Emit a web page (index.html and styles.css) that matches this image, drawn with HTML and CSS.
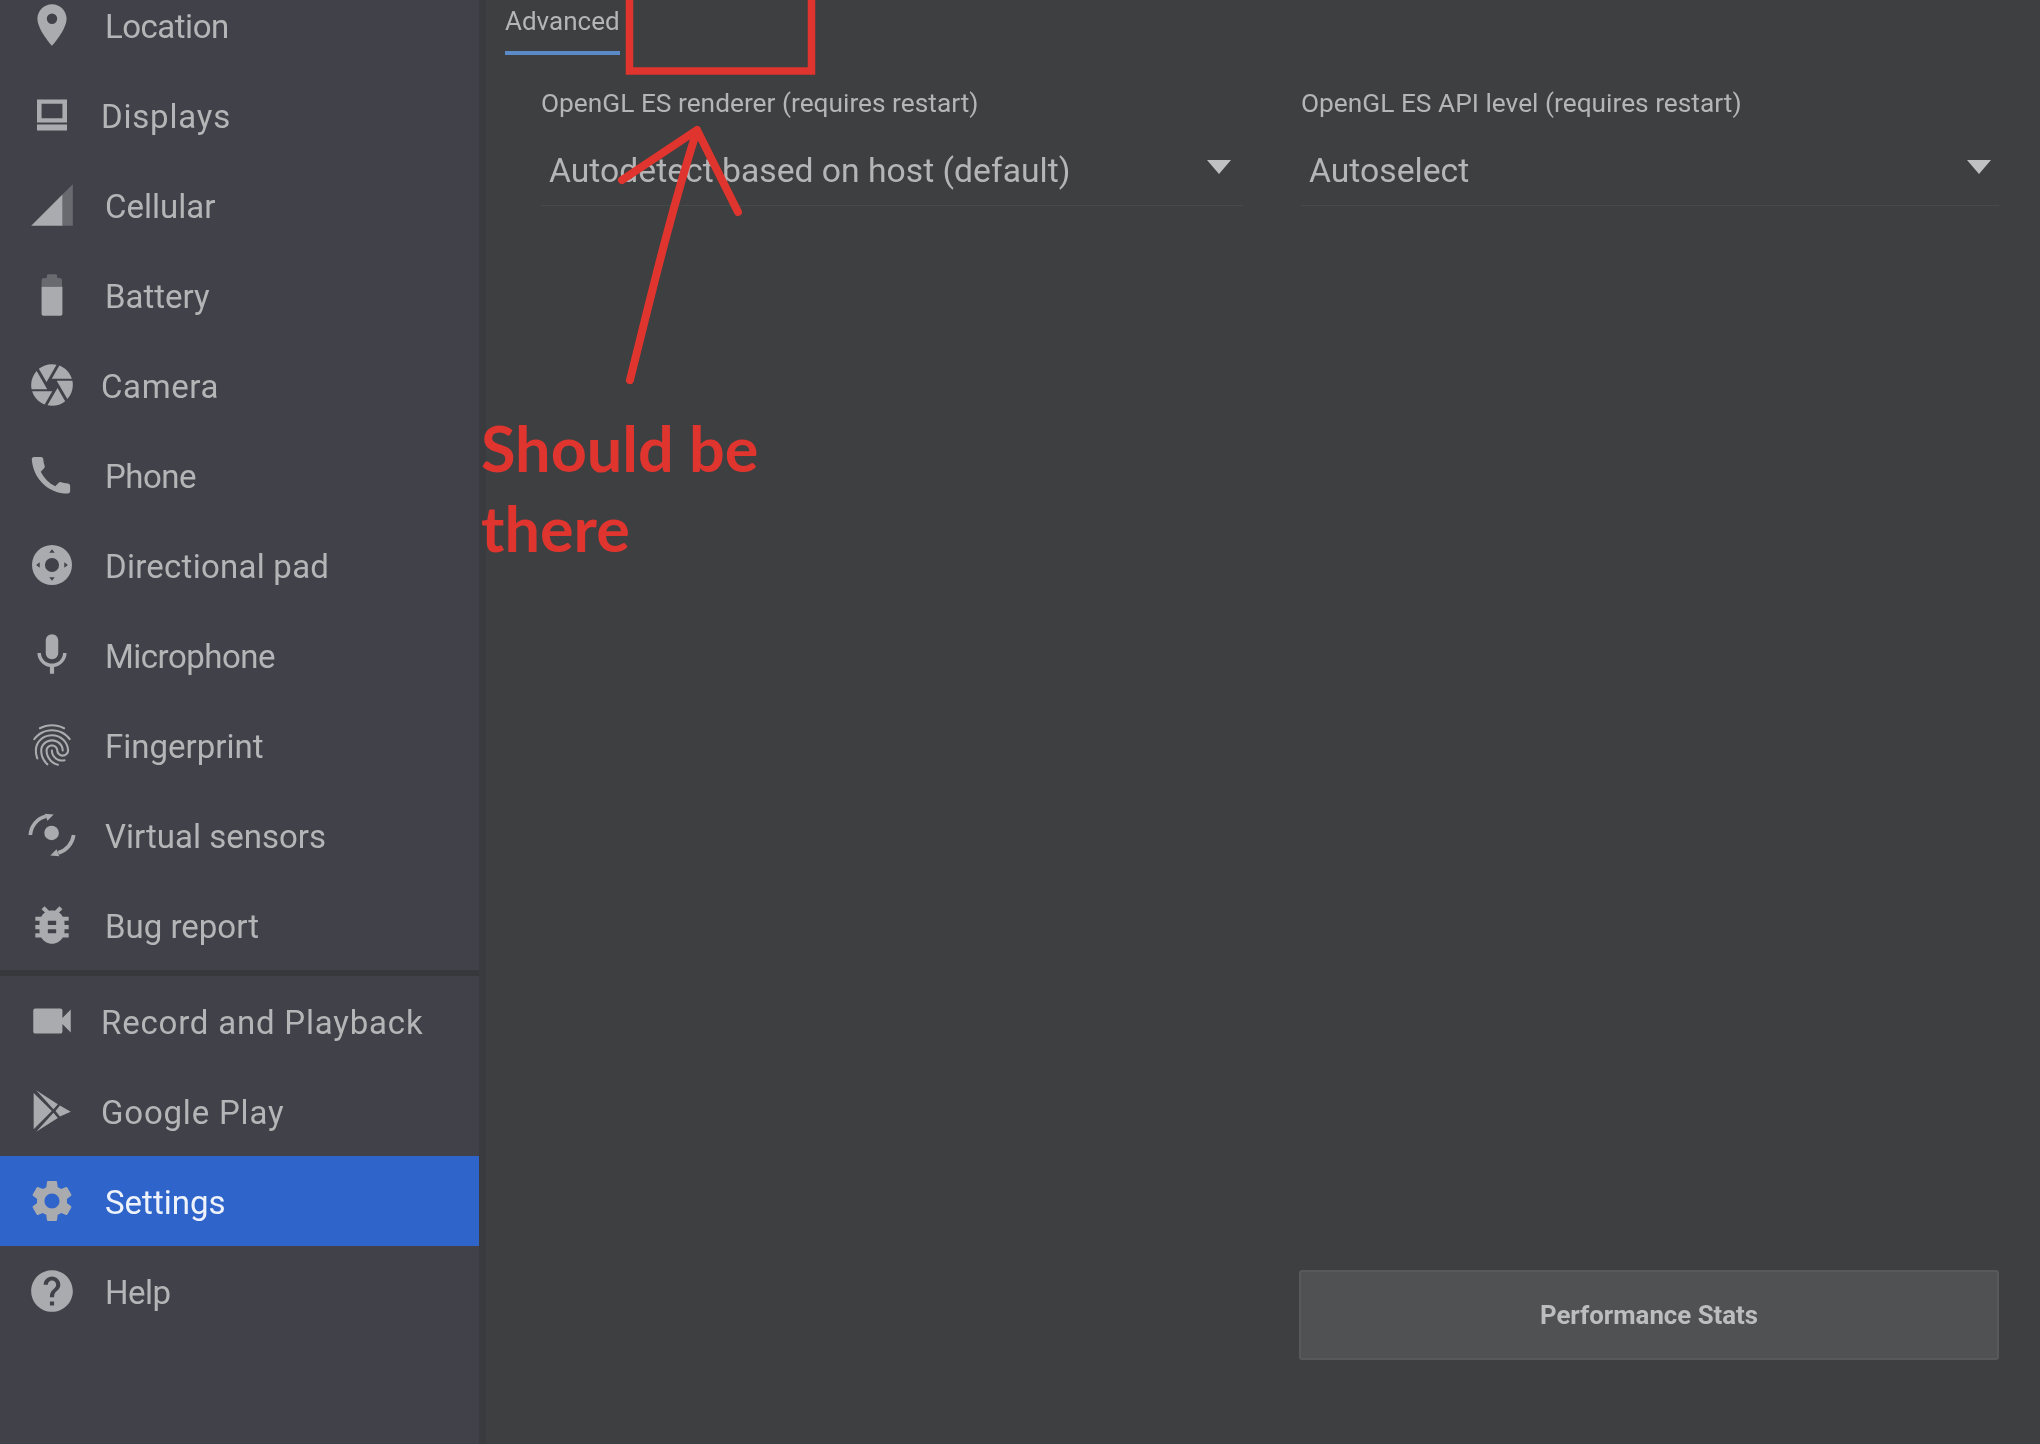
FILE: index.html
```html
<!DOCTYPE html>
<html lang="en">
<head>
<meta charset="utf-8">
<title>Extended controls - Settings</title>
<link rel="stylesheet" href="styles.css">
</head>
<body>
<div class="app">
  <nav class="sidebar">
    <ul class="nav-group nav-group-first">
      <li class="nav-row nav-row-snug"><svg class="icon" viewBox="0 0 24 24"><path fill-rule="evenodd" d="M12 2C8.13 2 5 5.13 5 9c0 5.25 7 13 7 13s7-7.75 7-13c0-3.87-3.13-7-7-7zm0 9.5a2.5 2.5 0 010-5 2.5 2.5 0 010 5z"/></svg><span>Location</span></li>
      <li class="nav-row nav-row-tight"><svg class="icon" viewBox="0 0 24 24"><path fill-rule="evenodd" d="M4.8 4.6h14.4v11H4.8zM7 6.6v7h10v-7zM4.8 16.6h14.4v2.8H4.8z"/></svg><span>Displays</span></li>
      <li class="nav-row"><svg class="icon" viewBox="0 0 24 24"><path class="dim" d="M17 7L22 2v20h-5z"/><path d="M2 22L17 7v15z"/></svg><span>Cellular</span></li>
      <li class="nav-row"><svg class="icon" viewBox="0 0 24 24"><path class="dim" d="M9.5 2.8c0-.4.3-.8.8-.8h3.400c.5 0 .8.4.8.8v1h1.200c.6 0 1.100.5 1.100 1.100V8H7V4.900c0-.6.5-1.100 1.100-1.100h1.400z"/><path d="M7 8h10v13c0 .6-.5 1-1.100 1H8.100C7.500 22 7 21.600 7 21z"/></svg><span>Battery</span></li>
      <li class="nav-row nav-row-tight nav-row-camera"><svg class="icon" viewBox="0 0 24 24"><path d="M9.400 10.500l4.770-8.260C13.470 2.090 12.750 2 12 2c-2.400 0-4.600.85-6.320 2.250l3.660 6.350.06-.1zM21.540 9c-.92-2.920-3.150-5.260-6-6.340L11.880 9h9.660zm.26 1h-7.490l.29.5 4.760 8.250C21 16.970 22 14.610 22 12c0-.69-.07-1.350-.2-2zM8.540 12l-3.900-6.750C3.010 7.030 2 9.390 2 12c0 .69.07 1.350.2 2h7.490l-1.150-2zm-6.080 3c.92 2.920 3.150 5.260 6 6.340L12.120 15H2.460zm11.270 0l-3.900 6.760c.7.15 1.420.24 2.170.24 2.400 0 4.600-.85 6.320-2.250l-3.660-6.350-.93 1.600z"/></svg><span>Camera</span></li>
      <li class="nav-row nav-row-snug"><svg class="icon" viewBox="0 0 24 24"><path d="M3.300 3.400h3.400c.6 0 1 .4 1.100 1 .1 1.200.3 2.300.7 3.300.1.4 0 .8-.3 1.100L6.600 10.400c1.500 3.100 3.900 5.500 7 7l1.600-1.700c.3-.3.7-.4 1.100-.2 1 .3 2.100.5 3.300.6.6.1 1.100.5 1.100 1.100v2.600c0 .6-.5 1.100-1.100 1.100C10.200 20.900 3 13.700 2.300 4.500c0-.6.4-1.100 1-1.100z"/></svg><span>Phone</span></li>
      <li class="nav-row nav-row-wide"><svg class="icon" viewBox="0 0 24 24"><path fill-rule="evenodd" d="M12 2.400a9.600 9.600 0 110 19.200 9.600 9.600 0 010-19.200zm0 6.200a3.400 3.400 0 100 6.800 3.400 3.400 0 000-6.800zM12 4.400l-1.300 1.700h2.600zM12 19.600l-1.300-1.700h2.600zM4.400 12l1.700-1.300v2.600zM19.600 12l-1.700-1.300v2.600z"/></svg><span>Directional pad</span></li>
      <li class="nav-row nav-row-snug"><svg class="icon" viewBox="0 0 24 24"><path d="M12 14c1.660 0 2.990-1.340 2.990-3L15 5c0-1.660-1.340-3-3-3S9 3.340 9 5v6c0 1.660 1.340 3 3 3zm5.300-3c0 3-2.540 5.100-5.300 5.100S6.700 14 6.700 11H5c0 3.410 2.720 6.230 6 6.720V21h2v-3.280c3.280-.48 6-3.300 6-6.720h-1.700z"/></svg><span>Microphone</span></li>
      <li class="nav-row"><svg class="icon" viewBox="0 0 24 24"><path d="M17.810 4.470c-.08 0-.16-.02-.23-.06C15.660 3.420 14 3 12.010 3c-1.980 0-3.860.47-5.570 1.410-.24.13-.54.04-.68-.2-.13-.24-.04-.55.2-.68C7.820 2.520 9.860 2 12.010 2c2.130 0 3.990.47 6.030 1.520.25.13.34.43.21.67-.09.18-.26.28-.44.28zM3.500 9.720c-.1 0-.2-.03-.29-.09-.23-.16-.28-.47-.12-.7.99-1.400 2.250-2.500 3.750-3.270C9.980 4.040 14 4.030 17.150 5.650c1.500.77 2.760 1.860 3.750 3.250.16.22.11.54-.12.7-.23.16-.54.11-.7-.12-.9-1.260-2.040-2.250-3.390-2.940-2.870-1.470-6.540-1.470-9.400.01-1.360.7-2.500 1.700-3.400 2.960-.08.14-.23.21-.39.21zm6.250 12.070c-.13 0-.26-.05-.35-.15-.87-.87-1.340-1.430-2.010-2.640-.69-1.230-1.050-2.730-1.050-4.340 0-2.970 2.540-5.390 5.660-5.390s5.660 2.420 5.660 5.390c0 .28-.22.5-.5.5s-.5-.22-.5-.5c0-2.420-2.090-4.390-4.660-4.390-2.570 0-4.660 1.970-4.660 4.390 0 1.440.32 2.770.93 3.850.64 1.150 1.080 1.640 1.850 2.420.19.2.19.51 0 .71-.11.1-.24.15-.37.15zm7.170-1.850c-1.190 0-2.240-.3-3.100-.89-1.490-1.010-2.380-2.650-2.380-4.390 0-.28.22-.5.5-.5s.5.22.5.5c0 1.410.72 2.740 1.940 3.560.71.48 1.540.71 2.540.71.24 0 .64-.03 1.040-.1.27-.05.53.13.58.41.05.27-.13.53-.41.58-.57.11-1.070.12-1.210.12zM14.910 22c-.04 0-.09-.01-.13-.02-1.590-.44-2.630-1.030-3.720-2.100-1.400-1.390-2.170-3.240-2.170-5.220 0-1.620 1.380-2.940 3.080-2.940 1.700 0 3.080 1.320 3.080 2.940 0 1.070.93 1.940 2.080 1.940s2.080-.87 2.080-1.940c0-3.770-3.250-6.830-7.250-6.830-2.840 0-5.440 1.580-6.610 4.030-.39.81-.59 1.760-.59 2.800 0 .78.07 2.010.67 3.610.1.26-.03.55-.29.64-.26.1-.55-.04-.64-.29-.49-1.310-.73-2.610-.73-3.960 0-1.200.23-2.290.68-3.240 1.330-2.790 4.280-4.600 7.510-4.600 4.550 0 8.250 3.510 8.250 7.830 0 1.620-1.380 2.940-3.080 2.940s-3.080-1.320-3.080-2.940c0-1.070-.93-1.940-2.080-1.940s-2.080.87-2.080 1.940c0 1.710.66 3.310 1.870 4.510.95.94 1.860 1.460 3.270 1.850.27.07.42.35.35.61-.05.23-.26.38-.47.38z"/></svg><span>Fingerprint</span></li>
      <li class="nav-row"><svg class="icon" viewBox="0 0 24 24"><circle cx="11.800" cy="11" r="3.500"/><path class="arc" d="M1.600 12A10 10 0 0 1 9 3M22.400 12A10.500 10.500 0 0 1 15 20.600"/><path d="M8.500 1.800L12.800 2.200 9.800 5.200zM15.500 22.200L11.200 21.800 14.200 18.800z"/></svg><span>Virtual sensors</span></li>
      <li class="nav-row"><svg class="icon" viewBox="0 0 24 24"><path d="M20 8h-2.810c-.45-.78-1.070-1.450-1.820-1.960L17 4.410 15.590 3l-2.170 2.170C12.960 5.060 12.490 5 12 5c-.49 0-.96.06-1.410.17L8.410 3 7 4.410l1.620 1.630C7.880 6.550 7.260 7.220 6.810 8H4v2h2.090c-.05.33-.09.66-.09 1v1H4v2h2v1c0 .34.04.67.09 1H4v2h2.810c1.040 1.790 2.970 3 5.190 3s4.150-1.210 5.190-3H20v-2h-2.090c.05-.33.09-.66.09-1v-1h2v-2h-2v-1c0-.34-.04-.67-.09-1H20V8zm-6 8h-4v-2h4v2zm0-4h-4v-2h4v2z"/></svg><span>Bug report</span></li>
    </ul>
    <ul class="nav-group">
      <li class="nav-row nav-row-tight"><svg class="icon" viewBox="0 0 24 24"><path d="M17 10.500V7c0-.55-.45-1-1-1H4c-.55 0-1 .45-1 1v10c0 .55.45 1 1 1h12c.55 0 1-.45 1-1v-3.500l4 4v-11l-4 4z"/></svg><span>Record and Playback</span></li>
      <li class="nav-row nav-row-tight"><svg class="icon" viewBox="0 0 24 24"><path d="M3.200 3.300v17.400L11.900 12zM4.400 2L14.800 8.700 12.700 11.200zM4.400 22L14.800 15.300 12.700 12.800zM15.800 9.400L21 12.300 15.800 14.600 13.700 12z"/></svg><span>Google Play</span></li>
      <li class="nav-row nav-row-active"><svg class="icon" viewBox="0 0 24 24"><path d="M19.140 12.940c.04-.3.06-.61.06-.94 0-.32-.02-.64-.07-.94l2.030-1.580c.18-.14.23-.41.12-.61l-1.920-3.320c-.12-.22-.37-.29-.59-.22l-2.390.96c-.5-.38-1.030-.7-1.620-.94L14.400 2.810c-.04-.24-.24-.41-.48-.41h-3.840c-.24 0-.43.17-.47.41L9.250 5.350C8.660 5.590 8.120 5.920 7.630 6.290L5.240 5.330c-.22-.08-.47 0-.59.22L2.740 8.870C2.620 9.080 2.660 9.340 2.860 9.480l2.030 1.580C4.840 11.360 4.800 11.690 4.800 12s.02.64.07.94l-2.030 1.580c-.18.14-.23.41-.12.61l1.920 3.320c.12.22.37.29.59.22l2.390-.96c.5.38 1.030.7 1.620.94l.36 2.540c.05.24.24.41.48.41h3.840c.24 0 .44-.17.47-.41l.36-2.540c.59-.24 1.130-.56 1.620-.94l2.390.96c.22.08.47 0 .59-.22l1.920-3.320c.12-.22.07-.47-.12-.61L19.140 12.940zM12 15.600c-1.980 0-3.600-1.620-3.600-3.600s1.620-3.600 3.600-3.600 3.600 1.620 3.600 3.600S13.980 15.600 12 15.600z"/></svg><span>Settings</span></li>
      <li class="nav-row nav-row-snug"><svg class="icon" viewBox="0 0 24 24"><path d="M12 2C6.480 2 2 6.480 2 12s4.480 10 10 10 10-4.480 10-10S17.520 2 12 2zm1 17h-2v-2h2v2zm2.070-7.750l-.9.92C13.450 12.900 13 13.500 13 15h-2v-.5c0-1.100.45-2.100 1.170-2.830l1.240-1.260c.37-.36.59-.86.59-1.410 0-1.100-.9-2-2-2s-2 .9-2 2H8c0-2.210 1.790-4 4-4s4 1.790 4 4c0 .88-.36 1.680-.93 2.250z"/></svg><span>Help</span></li>
    </ul>
  </nav>
  <main class="content">
    <div class="tabs"><div class="tab">Advanced</div></div>
    <div class="fields">
      <div class="field">
        <label class="field-label">OpenGL ES renderer (requires restart)</label>
        <div class="select"><span>Autodetect based on host (default)</span><i class="caret"></i></div>
      </div>
      <div class="field">
        <label class="field-label">OpenGL ES API level (requires restart)</label>
        <div class="select"><span>Autoselect</span><i class="caret"></i></div>
      </div>
    </div>
    <div class="actions">
      <button class="button" type="button">Performance Stats</button>
    </div>
  </main>
  <svg class="annotation" viewBox="0 0 2040 1444">
    <rect class="mark-box" x="629.500" y="-20" width="182" height="91"/>
    <path class="mark-arrow" d="M630 380C650 300 670 215 697 130M622 180L697 130L738 212"/>
  </svg>
  <p class="annotation-text">Should be<br>there</p>
</div>
</body>
</html>
```
FILE: styles.css
```css
* { box-sizing: border-box; }
html, body { margin: 0; padding: 0; height: 100%; }
body { background: #3e3f41; overflow: hidden; }

.app {
  position: relative;
  display: flex;
  width: 2040px;
  height: 1444px;
  overflow: hidden;
  font-family: Roboto, "Liberation Sans", sans-serif;
  color: #b4b5b7;
  background: #3e3f41;
  filter: blur(0.7px);
}

.sidebar {
  flex: 0 0 486px;
  height: 1444px;
  background: #414249;
  border-right: 7px solid #3a3b3f;
}
.nav-group { list-style: none; margin: 0; padding: 0; }
.nav-group-first { margin-top: -20px; border-bottom: 6px solid #37383c; }
.nav-row {
  display: flex;
  align-items: center;
  gap: 28px;
  height: 90px;
  padding-left: 27px;
  font-size: 33px;
  white-space: nowrap;
}
.nav-row span { padding-top: 2px; }
.nav-row-tight { gap: 24px; letter-spacing: 0.8px; }
.nav-row-camera { letter-spacing: 0.6px; }
.nav-row-snug { letter-spacing: -0.5px; }
.nav-row-wide { letter-spacing: 0.25px; }
.nav-row-active { background: #2f65ca; color: #eef2fb; }
.icon { flex: none; width: 50px; height: 50px; fill: #a9abae; }
.icon .dim { fill: #686a70; }
.icon .arc { fill: none; stroke: #a9abae; stroke-width: 1.8; }

.content {
  flex: 1;
  display: flex;
  flex-direction: column;
  padding: 0 41px 84px 19px;
}
.tabs { display: flex; height: 55px; }
.tab {
  font-size: 26px;
  line-height: 42px;
  height: 55px;
  border-bottom: 4px solid #5a8ac8;
}
.fields {
  display: grid;
  grid-template-columns: 702px 698px;
  column-gap: 58px;
  padding: 34px 0 0 36px;
}
.field-label { display: block; font-size: 26.3px; line-height: 28px; }
.select {
  display: flex;
  align-items: center;
  justify-content: space-between;
  height: 89px;
  padding: 19px 12px 0 8px;
  font-size: 33.7px;
  border-bottom: 1px solid #48494b;
}
.field + .field .select { padding-right: 8px; }
.caret {
  width: 0;
  height: 0;
  margin-bottom: 8px;
  border-left: 12px solid transparent;
  border-right: 12px solid transparent;
  border-top: 14px solid #c0c1c3;
}
.actions { margin-top: auto; display: flex; justify-content: flex-end; }
.button {
  width: 700px;
  height: 90px;
  font-family: inherit;
  font-size: 25.8px;
  font-weight: 700;
  color: #bcbdbf;
  background: #505153;
  border: 2px solid #58595b;
  border-radius: 3px;
}

.annotation {
  position: absolute;
  inset: 0;
  width: 2040px;
  height: 1444px;
  pointer-events: none;
}
.mark-box { fill: none; stroke: #e0352f; stroke-width: 7.5; }
.mark-arrow { fill: none; stroke: #e0352f; stroke-width: 8; stroke-linecap: round; stroke-linejoin: round; }
.annotation-text {
  position: absolute;
  left: 481px;
  top: 408px;
  margin: 0;
  font-family: Lato, "Liberation Sans", sans-serif;
  font-size: 63px;
  font-weight: 700;
  line-height: 80px;
  color: #e0352f;
}
```
